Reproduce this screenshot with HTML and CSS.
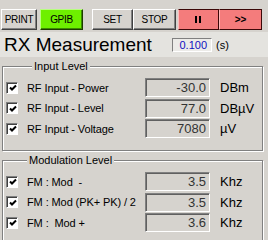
FILE: index.html
```html
<!DOCTYPE html>
<html lang="en">
<head>
    <meta charset="UTF-8">
    <title>RX Measurement</title>
    <link rel="stylesheet" href="styles.css">
</head>
<body>
    <!-- TOOLBAR -->
    <div class="toolbar">
        <button class="btn btn-print">PRINT</button>
        <button class="btn btn-gpib">GPIB</button>
        <button class="btn btn-set">SET</button>
        <button class="btn btn-stop">STOP</button>
        <button class="btn btn-red btn-pause">
            <svg width="7" height="7" viewBox="0 0 7 7"><rect x="0" y="0" width="2" height="7" fill="#000"/><rect x="4" y="0" width="2" height="7" fill="#000"/></svg>
        </button>
        <button class="btn btn-red btn-next">&gt;&gt;</button>
    </div>

    <!-- TITLE -->
    <div class="title-bar">
        <h1>RX Measurement</h1>
        <div class="interval">
            <span class="interval-box">0.100</span>
            <span class="interval-unit">(s)</span>
        </div>
    </div>

    <!-- INPUT LEVEL -->
    <fieldset class="group">
        <legend>Input Level</legend>
        <div class="rows">
            <div class="row">
                <label class="check-label"><span class="check"><svg width="8" height="8" viewBox="0 0 8 8"><path d="M1 3.5 L3 5.5 L7 1.5" stroke="#000" stroke-width="2" fill="none"/></svg></span>RF Input - Power</label>
                <span class="value">-30.0</span>
                <span class="unit">DBm</span>
            </div>
            <div class="row">
                <label class="check-label"><span class="check"><svg width="8" height="8" viewBox="0 0 8 8"><path d="M1 3.5 L3 5.5 L7 1.5" stroke="#000" stroke-width="2" fill="none"/></svg></span>RF Input - Level</label>
                <span class="value">77.0</span>
                <span class="unit">DBµV</span>
            </div>
            <div class="row">
                <label class="check-label"><span class="check"><svg width="8" height="8" viewBox="0 0 8 8"><path d="M1 3.5 L3 5.5 L7 1.5" stroke="#000" stroke-width="2" fill="none"/></svg></span>RF Input - Voltage</label>
                <span class="value">7080</span>
                <span class="unit">µV</span>
            </div>
        </div>
    </fieldset>

    <!-- MODULATION LEVEL -->
    <fieldset class="group group-mod">
        <legend>Modulation Level</legend>
        <div class="rows">
            <div class="row">
                <label class="check-label"><span class="check"><svg width="8" height="8" viewBox="0 0 8 8"><path d="M1 3.5 L3 5.5 L7 1.5" stroke="#000" stroke-width="2" fill="none"/></svg></span>FM : Mod&nbsp; -</label>
                <span class="value">3.5</span>
                <span class="unit">Khz</span>
            </div>
            <div class="row">
                <label class="check-label"><span class="check"><svg width="8" height="8" viewBox="0 0 8 8"><path d="M1 3.5 L3 5.5 L7 1.5" stroke="#000" stroke-width="2" fill="none"/></svg></span>FM : Mod (PK+ PK) / 2</label>
                <span class="value">3.5</span>
                <span class="unit">Khz</span>
            </div>
            <div class="row">
                <label class="check-label"><span class="check"><svg width="8" height="8" viewBox="0 0 8 8"><path d="M1 3.5 L3 5.5 L7 1.5" stroke="#000" stroke-width="2" fill="none"/></svg></span>FM :&nbsp; Mod +</label>
                <span class="value">3.6</span>
                <span class="unit">Khz</span>
            </div>
        </div>
    </fieldset>
</body>
</html>
```

FILE: styles.css
```css
*{
    margin:0;
    box-sizing: border-box;
}
body{
    margin: 0;
    padding: 0;
    background-color: #d6d3ce;
    font-family: "Liberation Sans", Arial, sans-serif;
    color: #000;
    overflow: hidden;
}
/* TOOLBAR */
.toolbar{
    display: flex;
    padding: 9px 0 0 1px;
    height: 30px;
}
.btn{
    height: 21px;
    padding: 0;
    font-family: "Liberation Sans", Arial, sans-serif;
    font-size: 10px;
    letter-spacing: -0.3px;
    color: #000;
    background-color: #d6d3ce;
    border: 1px solid;
    border-color: #fff #404040 #404040 #fff;
    box-shadow: inset -1px -1px 0 #808080;
    display: flex;
    align-items: center;
    justify-content: center;
}
.btn-print{ width: 36px; }
.btn-gpib{
    width: 43px;
    margin-left: 3px;
    background-color: #6ef000;
    border-color: #b8ff80 #1c3c00 #1c3c00 #b8ff80;
    box-shadow: inset -1px -1px 0 #3c8c00;
}
.btn-set{ width: 41px; margin-left: 9px; }
.btn-stop{ width: 43px; }
.btn-red{
    background-color: #f47c7c;
    border-color: #3c0808 #3c0808 #3c0808 #fbb;
    box-shadow: none;
    font-weight: bold;
}
.btn-pause{ width: 41px; margin-left: 2px; }
.btn-next{ width: 43px; letter-spacing: 0; }
/* TITLE BAR */
.title-bar{
    display: flex;
    align-items: center;
    height: 25px;
    margin-top: 2px;
    background-color: #e4e3df;
}
.title-bar h1{
    font-size: 19px;
    font-weight: normal;
    padding-left: 4px;
    width: 172px;
    line-height: 25px;
}
.interval{
    display: flex;
    align-items: center;
}
.interval-box{
    width: 40px;
    height: 14px;
    font-size: 11px;
    line-height: 12px;
    color: #1010c0;
    text-align: right;
    padding-right: 4px;
    background-color: #ecebe8;
    border: 1px solid;
    border-color: #808080 #fff #fff #808080;
}
.interval-unit{
    font-size: 11px;
    margin-left: 4px;
}
/* GROUP BOXES */
.group{
    margin: 2px 5px 0 2px;
    padding: 0 0 12px 0;
    border: 1px solid #808080;
    box-shadow: 1px 1px 0 #fff, inset 1px 1px 0 #fff;
    min-width: 0;
}
.group legend{
    margin-left: 29px;
    padding: 0 2px;
    font-size: 11px;
    line-height: 14px;
    background-color: #d6d3ce;
}
.group-mod legend{
    margin-left: 24px;
}
.rows{
    padding-top: 5px;
    display: flex;
    flex-direction: column;
    gap: 1.5px;
}
.row{
    display: grid;
    grid-template-columns: 142px 65px auto;
    align-items: center;
    height: 19px;
}
.check-label{
    display: flex;
    align-items: center;
    padding-left: 3px;
    font-size: 11px;
    letter-spacing: -0.1px;
    white-space: nowrap;
}
.check{
    width: 12px;
    height: 12px;
    margin-right: 9px;
    background-color: #fff;
    border: 1px solid;
    border-color: #808080 #fff #fff #808080;
    box-shadow: inset 1px 1px 0 #404040;
    display: flex;
    align-items: center;
    justify-content: center;
    padding: 1px 0 0 1px;
}
.value{
    height: 19px;
    font-size: 13px;
    line-height: 17px;
    color: #333;
    text-align: right;
    padding-right: 3px;
    border: 1px solid;
    border-color: #808080 #fff #fff #808080;
    box-shadow: inset 1px 1px 0 #606060;
}
.unit{
    font-size: 13px;
    padding-left: 10px;
}
```
